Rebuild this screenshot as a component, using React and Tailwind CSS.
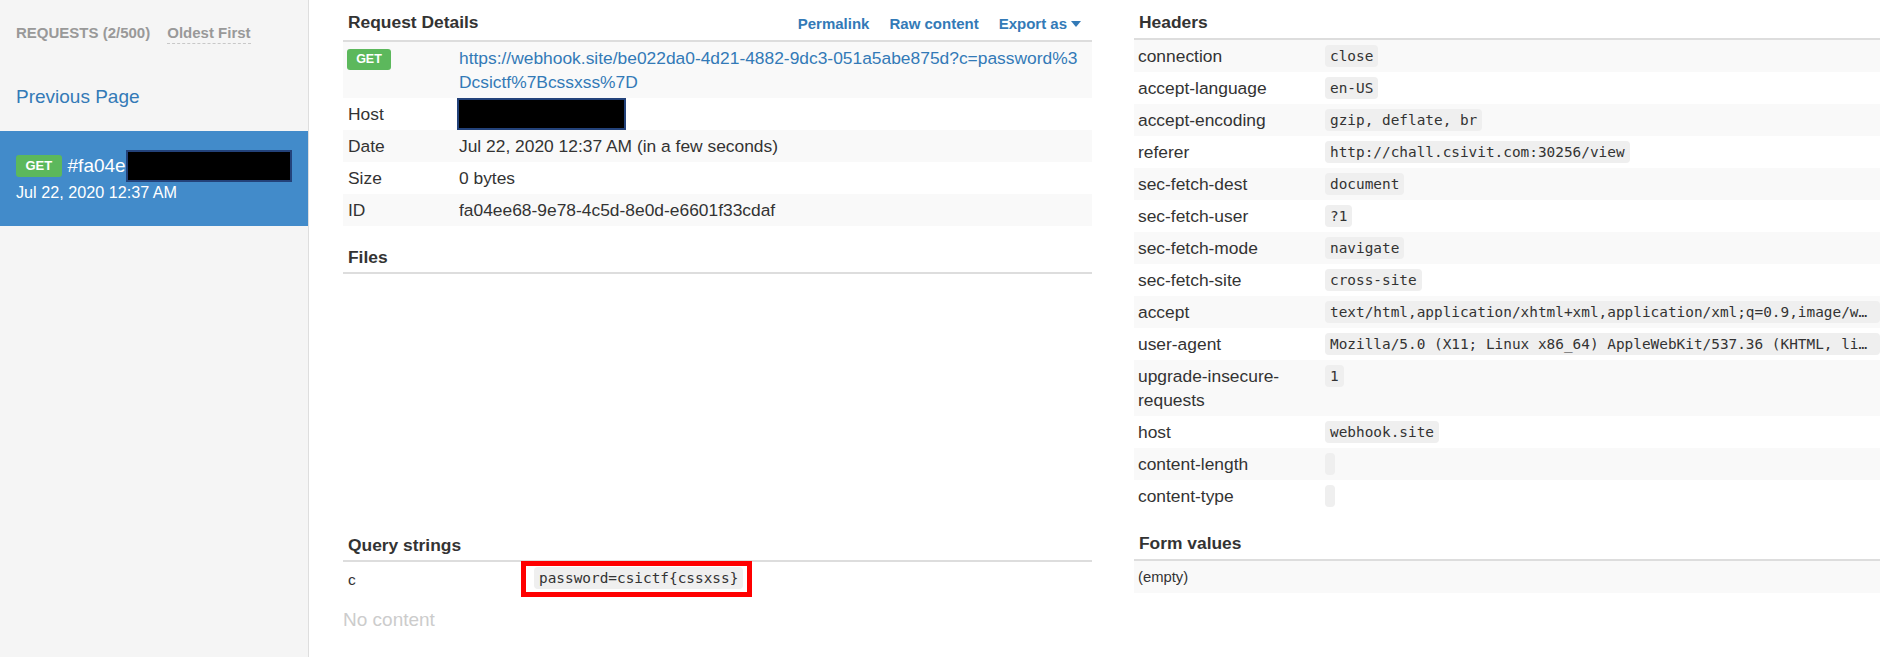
const headers = [
  ['connection', 'close'],
  ['accept-language', 'en-US'],
  ['accept-encoding', 'gzip, deflate, br'],
  ['referer', 'http://chall.csivit.com:30256/view'],
  ['sec-fetch-dest', 'document'],
  ['sec-fetch-user', '?1'],
  ['sec-fetch-mode', 'navigate'],
  ['sec-fetch-site', 'cross-site'],
  ['accept', 'text/html,application/xhtml+xml,application/xml;q=0.9,image/webp,image/apng,*/*;q=0.8,application/signed-exchange;v=b3;q=0.9'],
  ['user-agent', 'Mozilla/5.0 (X11; Linux x86_64) AppleWebKit/537.36 (KHTML, like Gecko) HeadlessChrome/84.0.4147.89 Safari/537.36'],
  ['upgrade-insecure-requests', '1'],
  ['host', 'webhook.site'],
  ['content-length', ''],
  ['content-type', ''],
];

const details = [
  ['Host', 'redacted'],
  ['Date', 'Jul 22, 2020 12:37 AM (in a few seconds)'],
  ['Size', '0 bytes'],
  ['ID', 'fa04ee68-9e78-4c5d-8e0d-e6601f33cdaf'],
];

function Code({ children }) {
  return (
    <code className="inline-block max-w-full h-[22px] mt-[1px] px-[5px] rounded-[4px] bg-[#efefef] text-[#333] font-['DejaVu_Sans_Mono',monospace] text-[14.4px] leading-[22px] whitespace-nowrap overflow-hidden text-ellipsis">
      {children}
    </code>
  );
}

function Redacted() {
  return <span className="block w-[169px] h-[32px] bg-black border-2 border-[#23427a]" />;
}

function SectionTitle({ children, className }) {
  return (
    <div className={'flex items-end px-[5px] border-b-2 border-[#dddddd] ' + className}>
      <h3 className="text-[17.4px] leading-[22px] font-bold text-[#333]">{children}</h3>
    </div>
  );
}

function Sidebar() {
  return (
    <div className="w-[309px] shrink-0 h-full bg-[#f5f5f5] border-r border-[#dedede]">
      <div className="flex items-center gap-[17px] px-[16px] pt-[22px]">
        <span className="text-[15px] leading-[22px] font-bold text-[#999]">REQUESTS (2/500)</span>
        <span className="text-[15px] leading-[20px] font-bold text-[#999] border-b border-dashed border-[#c8c8c8]">Oldest First</span>
      </div>
      <div className="px-[16px] pt-[39px] h-[87px]">
        <a className="text-[19px] leading-[28px] text-[#337ab7]">Previous Page</a>
      </div>
      <div className="bg-[#428bca] px-[16px] pt-[19px] pb-[24px] text-white">
        <div className="flex items-center h-[32px]">
          <span className="w-[46px] h-[22px] flex items-center justify-center rounded-[3px] bg-[#5cb85c] text-[13px] font-bold">GET</span>
          <span className="ml-[6px] text-[19px]">#fa04e</span>
          <span className="block w-[168px] h-[32px] bg-black border-2 border-[#23427a]" />
        </div>
        <div className="text-[16.2px] leading-[20px]">Jul 22, 2020 12:37 AM</div>
      </div>
    </div>
  );
}

function RequestDetails() {
  return (
    <div className="w-[749px] shrink-0">
      <div className="flex items-end justify-between h-[42px] px-[5px] pb-[7px] border-b-2 border-[#dddddd]">
        <h3 className="text-[17.4px] leading-[22px] font-bold text-[#333]">Request Details</h3>
        <div className="flex items-center gap-[20px] pr-[6px] text-[15px] font-bold text-[#337ab7] leading-[22px] mb-[-2px]">
          <a>Permalink</a>
          <a>Raw content</a>
          <a className="flex items-center gap-[4px]">
            Export as
            <svg width="10" height="6" viewBox="0 0 10 6"><path d="M0 0h10L5 6z" fill="#337ab7" /></svg>
          </a>
        </div>
      </div>
      <div className="flex h-[56px] bg-[#f9f9f9]">
        <div className="w-[111px] shrink-0 pl-[4px] pt-[7px]">
          <span className="w-[44px] h-[21px] flex items-center justify-center rounded-[3px] bg-[#5cb85c] text-white text-[12.5px] font-bold">GET</span>
        </div>
        <div className="flex-1 min-w-0 pl-[5px] pr-[7px] py-[4px] leading-[24px] break-all">
          <a className="text-[#337ab7]">https://webhook.site/be022da0-4d21-4882-9dc3-051a5abe875d?c=password%3Dcsictf%7Bcssxss%7D</a>
        </div>
      </div>
      {details.map(([k, v], i) => (
        <div key={k} className={'flex h-[32px] ' + (i % 2 === 1 ? 'bg-[#f9f9f9]' : '')}>
          <div className="w-[111px] shrink-0 px-[5px] py-[4px] leading-[24px]">{k}</div>
          <div className="flex-1 min-w-0 px-[5px] py-[4px] leading-[24px]">
            {v === 'redacted' ? <div className="ml-[-2px] mt-[-4px]"><Redacted /></div> : v}
          </div>
        </div>
      ))}
      <SectionTitle className="h-[48px] pb-[4px]">Files</SectionTitle>
      <div className="h-[240px]" />
      <SectionTitle className="h-[48px] pb-[4px]">Query strings</SectionTitle>
      <div className="flex items-start h-[35px]">
        <div className="w-[178px] shrink-0 px-[5px] h-[35px] flex items-center text-[15.5px]">c</div>
        <div className="inline-block border-[5px] border-[#ff0000] pl-[8px] pr-[4px] mt-[-1px] h-[36px]">
          <Code>password=csictf{'{'}cssxss{'}'}</Code>
        </div>
      </div>
      <p className="mt-[10px] text-[19px] leading-[26px] text-[#cccccc]">No content</p>
    </div>
  );
}

function HeadersPanel() {
  return (
    <div className="flex-1 min-w-0">
      <SectionTitle className="h-[40px] pb-[5px]">Headers</SectionTitle>
      {headers.map(([k, v], i) => (
        <div key={k} className={'flex ' + (i % 2 === 0 ? 'bg-[#f9f9f9]' : '')}>
          <div className="w-[186px] shrink-0 px-[4px] py-[4px] leading-[24px]">{k}</div>
          <div className="flex-1 min-w-0 pl-[5px] py-[4px] flex items-start">
            <Code>{v}</Code>
          </div>
        </div>
      ))}
      <SectionTitle className="h-[49px] pb-[5px]">Form values</SectionTitle>
      <div className="h-[32px] flex items-center px-[4px] bg-[#f9f9f9] text-[14.8px]">(empty)</div>
    </div>
  );
}

export default function App() {
  return (
    <div className="flex w-[1880px] h-[657px] overflow-hidden bg-white text-[17.4px] text-[#333] font-['Liberation_Sans',Arial,sans-serif]">
      <Sidebar />
      <div className="flex flex-1 min-w-0 pl-[34px] gap-[42px]">
        <RequestDetails />
        <HeadersPanel />
      </div>
    </div>
  );
}
